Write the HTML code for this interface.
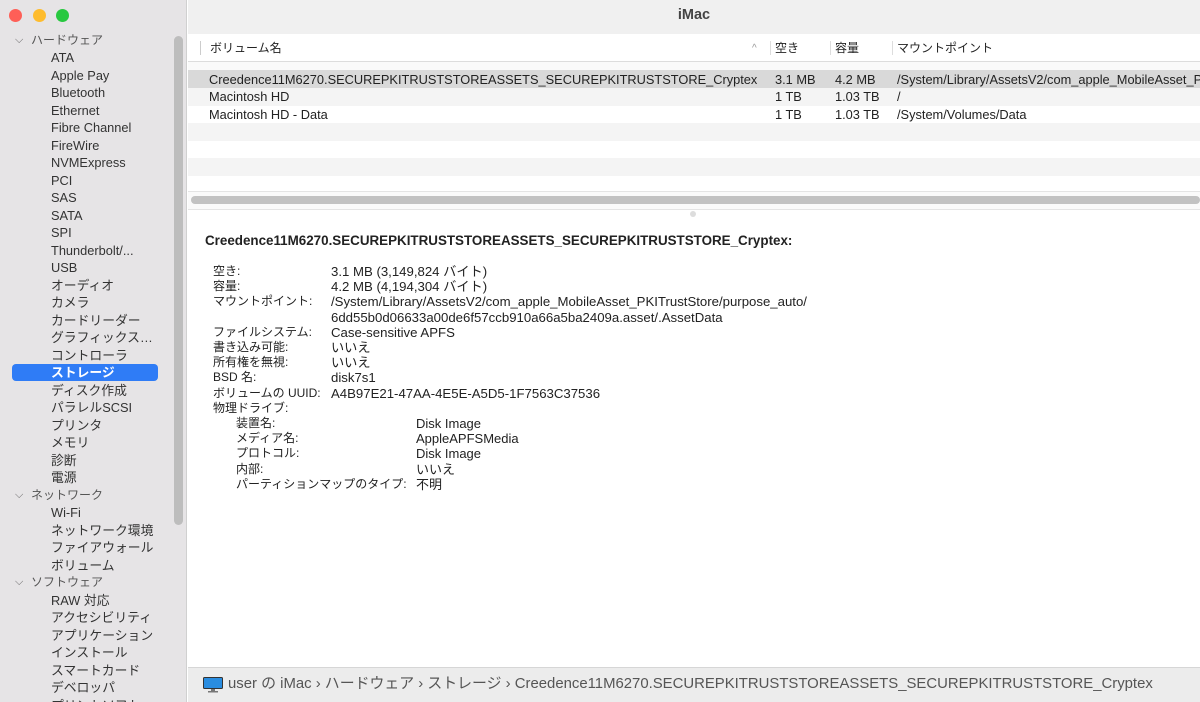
<!DOCTYPE html>
<html><head><meta charset="utf-8"><style>
*{margin:0;padding:0;box-sizing:border-box}
html,body{overflow:hidden}
body{width:1200px;height:702px;background:#fff;font-family:"Liberation Sans","Noto Sans CJK JP",sans-serif;font-size:12.8px;color:#222;position:relative}
.side{position:absolute;left:0;top:0;width:187px;height:702px;background:#e6e4e6;border-right:1px solid #d0d0d0}
.dot{position:absolute;top:9px;width:13px;height:13px;border-radius:50%}
.si{position:absolute;height:17px;line-height:17px;white-space:nowrap;color:#333;font-size:12.8px}
.sel{position:absolute;left:12px;top:364px;width:146px;height:17px;background:#2f7cf6;border-radius:4px}
.main{position:absolute;left:188px;top:0;width:1012px;height:702px;overflow:hidden}
.t{position:absolute;white-space:nowrap;line-height:15px}
.row{position:absolute;left:0;width:1012px;height:17.5px}
.lab{font-size:12px}
</style></head><body>
<div class="side">
<div class="dot" style="left:9px;background:#fe5f57"></div>
<div class="dot" style="left:33px;background:#febc2e"></div>
<div class="dot" style="left:56px;background:#28c840"></div>
<div style="position:absolute;left:174px;top:36px;width:9px;height:489px;background:#bdbdbd;border-radius:5px"></div>
<div class="sel"></div>
<div id="sb"></div>
</div>
<div class="main">
<div style="position:absolute;left:0;top:0;width:1012px;height:34px;background:#f0f0f0"></div>
<div class="t" style="left:0;width:1012px;text-align:center;top:8px;font-weight:bold;font-size:14.5px;color:#444">iMac</div>
<div style="position:absolute;left:0;top:34px;width:1012px;height:28px;background:#fff;border-bottom:1px solid #ddd"></div>
<div style="position:absolute;left:12px;top:41px;width:1px;height:14px;background:#ccc"></div>
<div style="position:absolute;left:582px;top:41px;width:1px;height:14px;background:#ddd"></div>
<div style="position:absolute;left:642px;top:41px;width:1px;height:14px;background:#ddd"></div>
<div style="position:absolute;left:704px;top:41px;width:1px;height:14px;background:#ddd"></div>
<div class="t lab" style="left:22px;top:41px">ボリューム名</div>
<div class="t" style="left:564px;top:41px;color:#999;font-size:10px">^</div>
<div class="t lab" style="left:587px;top:41px">空き</div>
<div class="t lab" style="left:647px;top:41px">容量</div>
<div class="t lab" style="left:709px;top:41px">マウントポイント</div>
<div style="position:absolute;left:0;top:62px;width:1012px;height:8px;background:#fafafa"></div>
<div class="row" style="top:70px;background:#d9d9d9"></div>
<div class="row" style="top:88px;background:#f4f4f4"></div>
<div class="row" style="top:123px;background:#f4f4f4"></div>
<div class="row" style="top:158px;background:#f4f4f4"></div>
<div style="position:absolute;left:0;top:191px;width:1012px;height:1px;background:#e4e4e4"></div>
<div style="position:absolute;left:0;top:192px;width:1012px;height:17px;background:#fafafa"></div>
<div style="position:absolute;left:3px;top:196px;width:1009px;height:8px;background:#c2c2c2;border-radius:4px"></div>
<div style="position:absolute;left:0;top:209px;width:1012px;height:1px;background:#e4e4e4"></div>
<div style="position:absolute;left:502px;top:211px;width:6px;height:6px;border-radius:50%;background:#ddd"></div>
<div class="t" style="left:21px;top:72px">Creedence11M6270.SECUREPKITRUSTSTOREASSETS_SECUREPKITRUSTSTORE_Cryptex</div>
<div class="t" style="left:587px;top:72px">3.1 MB</div><div class="t" style="left:647px;top:72px">4.2 MB</div><div class="t" style="left:709px;top:72px">/System/Library/AssetsV2/com_apple_MobileAsset_PKITrustStore</div>
<div class="t" style="left:21px;top:89px">Macintosh HD</div><div class="t" style="left:587px;top:89px">1 TB</div><div class="t" style="left:647px;top:89px">1.03 TB</div><div class="t" style="left:709px;top:89px">/</div>
<div class="t" style="left:21px;top:107px">Macintosh HD - Data</div><div class="t" style="left:587px;top:107px">1 TB</div><div class="t" style="left:647px;top:107px">1.03 TB</div><div class="t" style="left:709px;top:107px">/System/Volumes/Data</div>
<div class="t" style="left:17px;top:233px;font-weight:bold;font-size:13.4px">Creedence11M6270.SECUREPKITRUSTSTOREASSETS_SECUREPKITRUSTSTORE_Cryptex:</div>
<div class="t lab" style="left:25px;top:264px;line-height:15.2px">空き:<br>容量:<br>マウントポイント:<br><br>ファイルシステム:<br>書き込み可能:<br>所有権を無視:<br>BSD 名:<br>ボリュームの UUID:<br>物理ドライブ:</div>
<div class="t" style="left:143px;top:264px;line-height:15.2px;font-size:13.2px">3.1 MB (3,149,824 バイト)<br>4.2 MB (4,194,304 バイト)<br>/System/Library/AssetsV2/com_apple_MobileAsset_PKITrustStore/purpose_auto/<br>6dd55b0d06633a00de6f57ccb910a66a5ba2409a.asset/.AssetData<br>Case-sensitive APFS<br>いいえ<br>いいえ<br>disk7s1<br>A4B97E21-47AA-4E5E-A5D5-1F7563C37536</div>
<div class="t lab" style="left:48px;top:416px;line-height:15.2px">装置名:<br>メディア名:<br>プロトコル:<br>内部:<br>パーティションマップのタイプ:</div>
<div class="t" style="left:228px;top:416px;line-height:15.2px;font-size:13px">Disk Image<br>AppleAPFSMedia<br>Disk Image<br>いいえ<br>不明</div>
<div style="position:absolute;left:0;top:667px;width:1012px;height:35px;background:#ececec;border-top:1px solid #d6d6d6"></div>
<svg style="position:absolute;left:15px;top:677px" width="20" height="16"><rect x="0.5" y="0.5" width="19" height="11" rx="1" fill="#2a8de0" stroke="#333"/><rect x="8" y="12" width="4" height="2" fill="#777"/><rect x="5" y="14" width="10" height="1.5" fill="#777"/></svg>
<div class="t" style="left:40px;top:677px;font-size:14.9px;color:#555">user の iMac › ハードウェア › ストレージ › Creedence11M6270.SECUREPKITRUSTSTOREASSETS_SECUREPKITRUSTSTORE_Cryptex</div>
</div>
<script>
var items=[["ハードウェア",0],["ATA",1],["Apple Pay",1],["Bluetooth",1],["Ethernet",1],["Fibre Channel",1],["FireWire",1],["NVMExpress",1],["PCI",1],["SAS",1],["SATA",1],["SPI",1],["Thunderbolt/...",1],["USB",1],["オーディオ",1],["カメラ",1],["カードリーダー",1],["グラフィックス…",1],["コントローラ",1],["ストレージ",2],["ディスク作成",1],["パラレルSCSI",1],["プリンタ",1],["メモリ",1],["診断",1],["電源",1],["ネットワーク",0],["Wi-Fi",1],["ネットワーク環境",1],["ファイアウォール",1],["ボリューム",1],["ソフトウェア",0],["RAW 対応",1],["アクセシビリティ",1],["アプリケーション",1],["インストール",1],["スマートカード",1],["デベロッパ",1],["プリントソフト",1]];
var h="";items.forEach(function(it,i){var y=32+i*17.49;
if(it[1]==0){h+='<div class="si" style="left:15px;top:'+y+'px;color:#666;font-size:11px">⌵</div><div class="si" style="left:31px;top:'+y+'px;color:#555;font-size:12px">'+it[0]+'</div>';}
else h+='<div class="si" style="left:51px;top:'+y+'px;'+(it[1]==2?'color:#fff;font-weight:bold':'')+'">'+it[0]+'</div>';});
document.getElementById("sb").innerHTML=h;
</script>
</body></html>
